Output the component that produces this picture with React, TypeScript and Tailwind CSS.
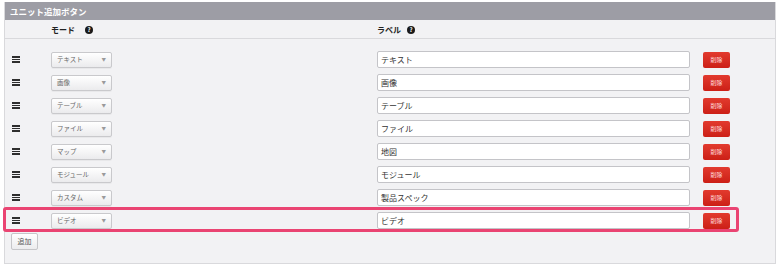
import React from "react";

const rows = [
  { mode: "テキスト", label: "テキスト" },
  { mode: "画像", label: "画像" },
  { mode: "テーブル", label: "テーブル" },
  { mode: "ファイル", label: "ファイル" },
  { mode: "マップ", label: "地図" },
  { mode: "モジュール", label: "モジュール" },
  { mode: "カスタム", label: "製品スペック" },
  { mode: "ビデオ", label: "ビデオ" },
];

const font = { fontFamily: '"Noto Sans CJK JP", "Noto Sans", sans-serif' };

function Help({ gap }: { gap: string }) {
  return (
    <span className={`${gap} inline-flex h-[8px] w-[8px] items-center justify-center rounded-full bg-[#1a1a1a] text-[6px] font-bold leading-none text-white`}>
      ?
    </span>
  );
}

function Handle() {
  return (
    <div className="flex w-[8px] flex-col gap-[1px]">
      <div className="h-[1.5px] bg-[#2e2e2e]" />
      <div className="h-[1.5px] bg-[#2e2e2e]" />
      <div className="h-[1.5px] bg-[#2e2e2e]" />
    </div>
  );
}

export default function App() {
  return (
    <div className="relative h-[268px] w-[780px] bg-white pt-[2px] pl-[4px]" style={font}>
      <div className="flex h-[262px] w-[772px] flex-col border border-t-0 border-[#d9d9dc] bg-[#f2f2f4]">
        <div className="flex h-[18px] items-center bg-[#9d9da5] pl-[5px] text-[8.5px] font-bold text-white">
          ユニット追加ボタン
        </div>
        <div className="flex h-[19px] items-center border-b border-[#d9d9dc] pt-[2px] text-[8px] font-bold text-[#222]">
          <div className="w-[46px]" />
          <div className="flex w-[326px] items-center">
            モード
            <Help gap="ml-[10px]" />
          </div>
          <div className="flex items-center">
            ラベル
            <Help gap="ml-[6px]" />
          </div>
        </div>
        <div className="flex flex-col pt-[9px]">
          {rows.map((r, i) => (
            <div key={i} className="flex h-[23px] items-center">
              <div className="flex w-[46px] pl-[7px]">
                <Handle />
              </div>
              <div className="w-[326px]">
                <div className="flex h-[16px] w-[61px] items-center justify-between rounded-[2px] border border-[#c9c9cc] bg-gradient-to-b from-white to-[#ebebed] pl-[5px] pr-[5px] text-[6.5px] text-[#666] shadow-[0_1px_0_rgba(0,0,0,0.04)]">
                  <span>{r.mode}</span>
                  <span className="text-[4.5px] text-[#9a9a9a]">▼</span>
                </div>
              </div>
              <div className="flex h-[17px] w-[313px] items-center rounded-[2px] border border-[#c4c4c8] bg-white pl-[3px] text-[8px] text-[#333]">
                {r.label}
              </div>
              <div className="ml-[13px] flex h-[16px] w-[27px] items-center justify-center rounded-[2px] bg-gradient-to-b from-[#e23a2e] to-[#cc1f16] text-[6px] text-[#ffd9de]">
                削除
              </div>
            </div>
          ))}
        </div>
        <div className="ml-[6px] mt-[1px] flex h-[17px] w-[27px] items-center justify-center rounded-[2px] border border-[#c6c6c9] bg-gradient-to-b from-white to-[#ececee] text-[7px] text-[#555]">
          追加
        </div>
      </div>
      <div className="pointer-events-none absolute left-[3px] top-[207px] h-[25px] w-[736px] rounded-[3px] border-[3px] border-[#ea4472]" />
    </div>
  );
}
